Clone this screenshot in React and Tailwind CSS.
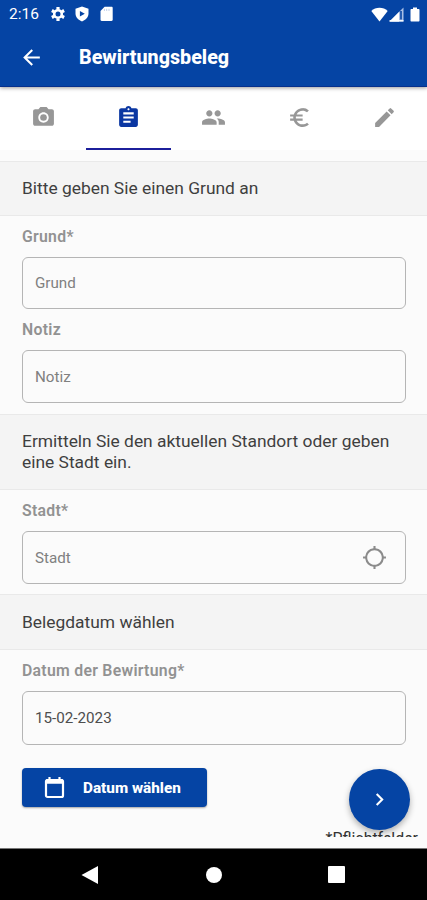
import React, { useState } from 'react';
import {
  MdArrowBack,
  MdPhotoCamera,
  MdAssignment,
  MdGroup,
  MdEuroSymbol,
  MdEdit,
  MdLocationSearching,
  MdChevronRight,
} from 'react-icons/md';

const tabs = [
  { id: 'photo', icon: MdPhotoCamera },
  { id: 'reason', icon: MdAssignment },
  { id: 'guests', icon: MdGroup },
  { id: 'amount', icon: MdEuroSymbol },
  { id: 'sign', icon: MdEdit },
];

function StatusBar() {
  return (
    <div className="h-7 flex items-center justify-between pl-[9px] pr-[7px] text-white">
      <div className="flex items-center">
        <span className="w-[41px] text-[15.5px] leading-7">2:16</span>
        <svg className="w-4 h-4" viewBox="0 0 16 16" fill="none" stroke="currentColor">
          <circle cx="8" cy="8" r="3.8" strokeWidth="2.6" />
          <path d="M8 1v2.600M8 12.400V15M1.900 4.500l2.300 1.300M11.800 10.200l2.300 1.300M1.900 11.500l2.300-1.300M11.800 5.800l2.300-1.300" strokeWidth="3.200" />
        </svg>
        <svg className="w-4 h-4 ml-2" viewBox="0 0 16 16" fill="currentColor">
          <path fillRule="evenodd" d="M8 .5 14.500 2.800v4.800c0 3.600-2.700 6.600-6.500 7.800C4.200 14.200 1.500 11.200 1.500 7.600V2.800zM5.900 4.900v5.600L10.800 7.700z" />
        </svg>
        <svg className="w-4 h-4 ml-[9px]" viewBox="0 0 16 16" fill="currentColor">
          <path d="M5.600.8h6.900c.7 0 1.200.5 1.200 1.200v11.700c0 .7-.5 1.200-1.200 1.200H2.700c-.7 0-1.200-.5-1.200-1.200V5z" />
          <path d="M5.400 2.800v2.200M7.700 2.800v2.200M10 2.800v2.200" stroke="#c3d1ea" strokeWidth="1" />
        </svg>
      </div>
      <div className="flex items-center">
        <svg className="w-[17px] h-[15px]" viewBox="0 0 17 15" fill="currentColor">
          <path d="M8.500 14.500.3 4C2.500 2 5.300.8 8.500.8S14.500 2 16.700 4z" />
        </svg>
        <svg className="w-[15px] h-[15px] ml-[1px]" viewBox="0 0 15 15">
          <path d="M14.500.5v14H.5z" fill="#a9bfe6" />
          <path d="M10 5v9.500H.5z" fill="#fff" />
          <path d="M12 4v8.500" stroke="#0544a4" strokeWidth="1.600" />
          <path d="M.5 13.800h14" stroke="#fff" strokeWidth="1.400" />
        </svg>
        <svg className="w-[10px] h-[15px] ml-[6px]" viewBox="0 0 10 15" fill="currentColor">
          <path d="M3 .5h4V2h1.800c.4 0 .7.300.7.700v11.100c0 .4-.3.700-.7.700H1.200c-.4 0-.7-.3-.7-.7V2.700c0-.4.300-.7.700-.7H3z" />
        </svg>
      </div>
    </div>
  );
}

function CalendarIcon() {
  return (
    <svg className="w-[21px] h-[23px]" viewBox="0 0 21 23" fill="none" stroke="currentColor">
      <rect x="2" y="4" width="17" height="17" rx="1.500" strokeWidth="2.200" />
      <path d="M2 5.500h17" strokeWidth="4.500" />
      <path d="M5.500 1v4M15.500 1v4" strokeWidth="2.200" />
    </svg>
  );
}

function SectionTitle({ children, className = '' }) {
  return (
    <div className={`border-y border-[#e9e9e9] bg-[#f4f4f4] px-[22px] text-[17.4px] leading-[21px] text-[#3f3f3f] ${className}`}>
      {children}
    </div>
  );
}

function Field({ label, placeholder, value, className = '', icon: Icon }) {
  return (
    <label className="block pl-[22px] pr-[21px]">
      <span className="block h-5 text-[15.8px] leading-5 tracking-[0.28px] font-semibold text-[#929292]">{label}</span>
      <span className={`mt-[10px] flex items-center rounded-[6px] border border-[#b5b5b5] pl-3 pr-[18px] ${className}`}>
        <input
          className="flex-1 min-w-0 bg-transparent pt-px outline-none text-[15.2px] text-[#4e4e4e] placeholder:text-[#808080]"
          placeholder={placeholder}
          defaultValue={value}
        />
        {Icon && <Icon className="w-[25px] h-[25px] text-[#8b8b8b]" />}
      </span>
    </label>
  );
}

export default function App() {
  const [activeTab, setActiveTab] = useState('reason');

  return (
    <div className="w-[427px] h-[900px] flex flex-col overflow-hidden bg-[#fbfbfb] font-['Roboto',sans-serif]">
      <header className="relative z-10 h-[87px] shrink-0 bg-[#0544a4] border-b border-[#06308c] shadow-[0_1px_4px_rgba(0,0,0,0.4)]">
        <StatusBar />
        <div className="h-[58px] flex items-center pl-[19px]">
          <MdArrowBack className="w-[25px] h-[25px] text-white" />
          <h1 className="ml-[35px] pt-px text-[19.7px] font-extrabold text-white">Bewirtungsbeleg</h1>
        </div>
      </header>

      <nav className="h-[63px] shrink-0 grid grid-cols-5 bg-white pl-px">
        {tabs.map(({ id, icon: Icon }) => (
          <button
            key={id}
            onClick={() => setActiveTab(id)}
            className={`flex items-center justify-center border-b-2 ${
              activeTab === id ? 'border-[#1c1f9b] text-[#0b37a2]' : 'border-transparent text-[#979797]'
            }`}
          >
            <Icon className="w-[25px] h-[25px]" />
          </button>
        ))}
      </nav>

      <main className="relative h-[699px] shrink-0 pt-[11px] border-b border-[#777]">
        <SectionTitle className="h-[55px] pt-[16px]">Bitte geben Sie einen Grund an</SectionTitle>
        <div className="h-[198px] pt-[11px] flex flex-col gap-[11px]">
          <Field label="Grund*" placeholder="Grund" className="h-[52px]" />
          <Field label="Notiz" placeholder="Notiz" className="h-[53px]" />
        </div>

        <SectionTitle className="h-[76px] pt-[16px]">
          Ermitteln Sie den aktuellen Standort oder geben eine Stadt ein.
        </SectionTitle>
        <div className="h-[104px] pt-[11px]">
          <Field label="Stadt*" placeholder="Stadt" className="h-[53px]" icon={MdLocationSearching} />
        </div>

        <SectionTitle className="h-[56px] pt-[17px]">Belegdatum wählen</SectionTitle>
        <div className="pt-[11px]">
          <Field label="Datum der Bewirtung*" value="15-02-2023" className="h-[54px]" />
        </div>

        <button className="mt-[23px] ml-[22px] w-[185px] h-[39px] flex items-center rounded-[4px] bg-[#0544a4] pl-[22px] text-white shadow-[0_1px_2px_rgba(0,0,0,0.35)]">
          <CalendarIcon />
          <span className="ml-[18px] pt-px text-[15.3px] font-extrabold">Datum wählen</span>
        </button>

        <div className="mt-[22px] h-[8px] overflow-hidden pr-[9px] text-right text-[15.9px] leading-[19px] text-[#333]">
          *Pflichtfelder
        </div>

        <button className="absolute right-[17px] bottom-[18px] w-[61px] h-[61px] flex items-center justify-center rounded-full bg-[#0544a4] text-white shadow-[0_3px_6px_rgba(0,0,0,0.3)]">
          <MdChevronRight className="w-[25px] h-[25px]" />
        </button>
      </main>

      <footer className="flex-1 flex items-center bg-black pl-[80px]">
        <svg className="w-5 h-5" viewBox="0 0 20 20" fill="#fff">
          <path d="M18 1v18L1.500 10z" />
        </svg>
        <div className="ml-[106px] w-4 h-4 rounded-full bg-white" />
        <div className="ml-[106px] w-[17px] h-[17px] rounded-[1px] bg-white" />
      </footer>
    </div>
  );
}
